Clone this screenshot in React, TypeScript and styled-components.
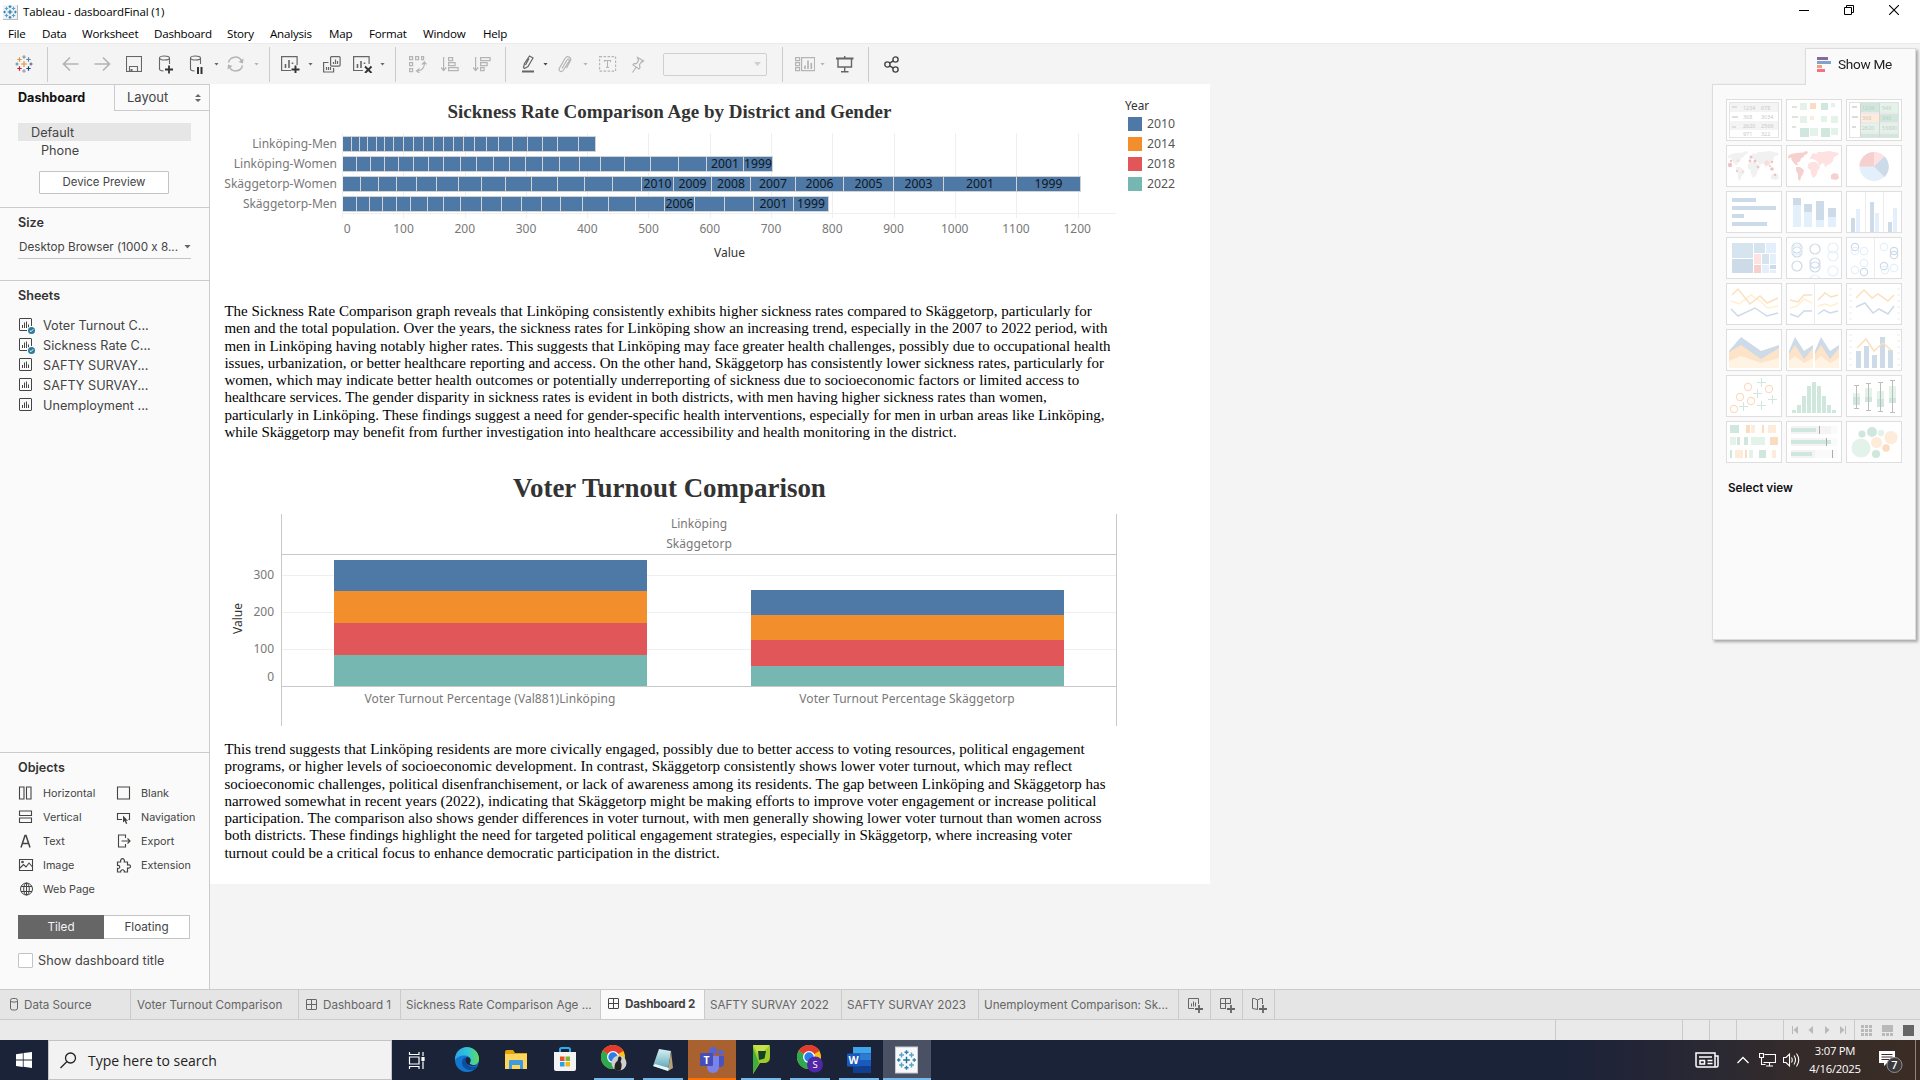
import React from 'react';
import styled, { createGlobalStyle, css } from 'styled-components';

const UI = '"Inter", "Liberation Sans", sans-serif';
const SYS = '"Open Sans", "Noto Sans", sans-serif';
const CHART = '"Noto Sans", "Open Sans", sans-serif';
const SERIF = '"Liberation Serif", "Times New Roman", serif';
const C = { blue: '#4e79a7', orange: '#f28e2b', red: '#e15759', teal: '#76b7b2', line: '#cbcbcb', icon: '#666666', dim: '#b4b4b4' };

const Global = createGlobalStyle`
  *, *::before, *::after { box-sizing: border-box; }
  body { margin: 0; background: #f4f4f4; overflow: hidden; }
  svg { display: block; flex: none; }
`;

const Screen = styled.div`
  position: relative;
  width: 1920px;
  height: 1080px;
  display: flex;
  flex-direction: column;
  background: #f4f4f4;
  font-family: ${UI};
  font-feature-settings: "calt" 0;
  white-space: nowrap;
  overflow: hidden;
`;

/* ---------- window chrome ---------- */
const TitleBar = styled.header`
  height: 22px;
  flex: none;
  display: flex;
  align-items: center;
  justify-content: space-between;
  background: #fff;
  padding: 0 20px 0 3px;
  font: 11.5px/22px ${SYS};
  letter-spacing: -0.13px;
  color: #000;
`;
const TitleLeft = styled.div`
  display: flex;
  align-items: center;
  gap: 5px;
  padding-top: 2px;
`;
const AppBadge = styled.div`
  width: 15px;
  height: 15px;
  background: #eef3f6;
  border-right: 1px solid #b9b9b9;
  border-bottom: 1px solid #b9b9b9;
`;
const WindowButtons = styled.div`
  display: flex;
  gap: 35px;
  padding-right: 1px;
  margin-top: -2px;
`;
const MenuBar = styled.nav`
  height: 21px;
  flex: none;
  display: flex;
  background: #fff;
  padding-left: 8px;
  font: 11.6px/23px ${SYS};
  letter-spacing: -0.22px;
  color: #000;
`;
const MenuItem = styled.span<{ $w: number }>`
  width: ${p => p.$w}px;
`;

/* ---------- toolbar ---------- */
const ToolBar = styled.div`
  height: 41px;
  flex: none;
  display: flex;
  align-items: center;
  border-top: 1px solid #ebebeb;
  background: #f4f4f4;
  padding-left: 15px;
`;
const Sep = styled.i<{ $ml: number }>`
  width: 1px;
  height: 35px;
  background: ${C.line};
  margin-left: ${p => p.$ml}px;
`;
const Tool = styled.span<{ $ml: number; $c?: string }>`
  margin-left: ${p => p.$ml}px;
  color: ${p => p.$c || C.icon};
`;
const Caret = styled.i<{ $ml?: number; $c?: string; $big?: boolean }>`
  width: ${p => (p.$big ? 7 : 5)}px;
  height: ${p => (p.$big ? 4 : 3)}px;
  flex: none;
  margin-left: ${p => p.$ml || 0}px;
  background: ${p => p.$c || C.icon};
  clip-path: polygon(0 0, 100% 0, 50% 100%);
`;
const ToolSelect = styled.div`
  margin-left: 18px;
  width: 104px;
  height: 23px;
  border: 1px solid #d0d0d0;
  border-radius: 2px;
  display: flex;
  align-items: center;
  justify-content: flex-end;
  padding-right: 5px;
`;

/* ---------- body ---------- */
const Body = styled.div`
  height: 905px;
  flex: none;
  display: flex;
`;
const Side = styled.aside`
  width: 210px;
  flex: none;
  display: flex;
  flex-direction: column;
  background: #fafafa;
  border-right: 1px solid ${C.line};
  border-top: 1px solid ${C.line};
  color: #444;
`;
const SideTabs = styled.div`
  display: flex;
  height: 26px;
  line-height: 25px;
`;
const TabOn = styled.div`
  width: 114px;
  padding-left: 18px;
  font-size: 12.6px;
  font-weight: 700;
  color: #111;
`;
const TabOff = styled.div`
  flex: 1;
  display: flex;
  align-items: center;
  justify-content: space-between;
  padding: 0 8px 0 12px;
  border-left: 1px solid ${C.line};
  border-bottom: 1px solid ${C.line};
  font-size: 13px;
`;
const Devices = styled.section`
  height: 97px;
  padding: 12px 18px 0;
  border-bottom: 1px solid ${C.line};
  font-size: 12.7px;
  line-height: 20px;
`;
const DeviceRow = styled.div<{ $on?: boolean }>`
  height: 18px;
  padding-left: ${p => (p.$on ? 13 : 23)}px;
  background: ${p => (p.$on ? '#e6e6e6' : 'none')};
`;
const PreviewButton = styled.div`
  width: 130px;
  height: 23px;
  margin: 12px 0 0 21px;
  border: 1px solid #c4c4c4;
  border-radius: 1px;
  background: #fff;
  text-align: center;
  font-size: 11.4px;
  line-height: 21px;
`;
const SizeBox = styled.section`
  height: 73px;
  padding: 5px 18px 0;
  border-bottom: 1px solid ${C.line};
`;
const Heading = styled.h2`
  margin: 0;
  font-size: 12.6px;
  line-height: 20px;
  font-weight: 600;
  color: #333;
`;
const SizeSelect = styled.div`
  display: flex;
  align-items: center;
  justify-content: space-between;
  height: 22px;
  margin-top: 4px;
  padding-left: 1px;
  padding-bottom: 2px;
  border-bottom: 1px solid #c4c4c4;
  font-size: 11.7px;
`;
const SheetsBox = styled.section`
  height: 472px;
  padding: 5px 18px 0;
  border-bottom: 1px solid ${C.line};
`;
const SheetRow = styled.div`
  display: flex;
  align-items: center;
  height: 20px;
  gap: 8px;
  font-size: 12.7px;
  &:first-of-type { margin-top: 9px; }
`;
const ObjectsBox = styled.section`
  padding: 5px 18px 0;
`;
const ObjectGrid = styled.div`
  display: grid;
  grid-template-columns: 98px 90px;
  grid-auto-rows: 24px;
  margin-top: 3px;
`;
const ObjectCell = styled.div`
  display: flex;
  align-items: center;
  gap: 8px;
  font-size: 10.8px;
`;
const Toggle = styled.div`
  display: grid;
  grid-template-columns: 86px 86px;
  height: 23px;
  margin-top: 14px;
  font-size: 11.7px;
  line-height: 24px;
  text-align: center;
`;
const ToggleHalf = styled.div<{ $on?: boolean }>`
  ${p => (p.$on
    ? css`background: #666; color: #f4f4f4;`
    : css`background: #fff; border: 1px solid #c4c4c4; border-left: 0; line-height: 22px;`)}
`;
const CheckRow = styled.div`
  display: flex;
  align-items: center;
  gap: 5px;
  margin-top: 15px;
  height: 15px;
  font-size: 12.7px;
`;
const Check = styled.i`
  width: 15px;
  height: 15px;
  border: 1px solid #c4c4c4;
  border-radius: 1px;
  background: #fff;
`;

/* ---------- dashboard canvas ---------- */
const Canvas = styled.main`
  width: 1000px;
  height: 800px;
  flex: none;
  display: flex;
  flex-direction: column;
  background: #fff;
  color: #000;
`;
const SicknessView = styled.section`
  display: flex;
  height: 219px;
`;
const SicknessChart = styled.div`
  width: 906px;
  padding-left: 12px;
`;
const ChartTitle = styled.h1<{ $big?: boolean }>`
  margin: 0;
  font-family: ${SERIF};
  font-weight: 700;
  font-size: ${p => (p.$big ? 26.95 : 19)}px;
  line-height: ${p => (p.$big ? 44 : 26)}px;
  padding: ${p => (p.$big ? '8px 0 0 303px' : '15px 0 0 225.5px')};
  color: #333;
`;
const Plot = styled.div`
  display: flex;
  margin-top: 8px;
`;
const RowLabels = styled.div`
  width: 115px;
  padding: 1px 0 0;
  text-align: right;
  font: 12px/20px ${CHART};
  color: #787878;
`;
const PlotArea = styled.div`
  width: 774px;
  height: 85px;
  margin-left: 5px;
  padding-top: 3px;
  border-left: 1px solid #efefef;
  background:
    linear-gradient(#efefef, #efefef) 0 80px / 774px 1px no-repeat,
    repeating-linear-gradient(90deg, transparent 0 60.3px, #efefef 60.3px 61.3px) 0 0 / 737px 100% no-repeat;
`;
const BarRow = styled.div`
  display: flex;
  height: 16px;
  margin-bottom: 4px;
  border-top: 1px solid #d2d2d2;
  border-bottom: 1px solid #d2d2d2;
  width: max-content;
`;
const Seg = styled.div<{ $w: number }>`
  width: ${p => p.$w}px;
  display: flex;
  justify-content: center;
  background: ${C.blue};
  border-right: 1px solid #d2d2d2;
  font: 12.2px/14px ${CHART};
  color: #101820;
`;
const XTicks = styled.div`
  display: flex;
  margin-left: 89.6px;
  margin-top: 2px;
  font: 12px/18px ${CHART};
  color: #787878;
`;
const XTick = styled.span`
  width: 61.25px;
  flex: none;
  text-align: center;
  &:first-child { padding-left: 10px; }
`;
const AxisTitle = styled.div`
  margin: 6px 0 0 492px;
  font: 12px/18px ${CHART};
  color: #333;
`;
const Legend = styled.div`
  padding: 12px 0 0 9px;
  font: 12.3px/20px ${CHART};
  color: #555;
`;
const LegendTitle = styled.div`
  line-height: 18px;
  font-size: 11.8px;
  color: #333;
`;
const LegendItem = styled.div<{ $c: string }>`
  display: flex;
  align-items: center;
  gap: 5px;
  height: 20px;
  padding-left: 3px;
  &::before {
    content: '';
    width: 14px;
    height: 14px;
    background: ${p => p.$c};
  }
`;
const Para = styled.p`
  margin: 0;
  padding-left: 14.4px;
  font: 15px/17.25px ${SERIF};
  white-space: pre;
`;
const VoterView = styled.section`
  height: 283px;
  margin-top: 17px;
`;
const VoterBody = styled.div`
  display: flex;
  margin-top: 4px;
`;
const YAxisTitle = styled.div`
  width: 20px;
  margin: 88px 0 0 18px;
  height: 32px;
  writing-mode: vertical-rl;
  transform: rotate(180deg);
  font: 12px/20px ${CHART};
  color: #333;
`;
const YTicks = styled.div`
  width: 26px;
  padding-top: 52px;
  text-align: right;
  font: 12px/18px ${CHART};
  color: #787878;
`;
const YTick = styled.div<{ $h: number }>`
  height: ${p => p.$h}px;
`;
const VoterFrame = styled.div`
  width: 836px;
  height: 212px;
  margin-left: 7px;
  border-left: 1px solid #c8c8c8;
  border-right: 1px solid #c8c8c8;
  font: 12px/20px ${CHART};
  letter-spacing: 0.05px;
  color: #787878;
  text-align: center;
`;
const FacetHead = styled.div`
  height: 41px;
  border-bottom: 1px solid #c8c8c8;
  line-height: 20px;
`;
const FacetPlot = styled.div`
  height: 132px;
  border-bottom: 1px solid #c8c8c8;
  display: grid;
  grid-template-columns: 416px 418px;
  align-items: end;
  justify-items: center;
  background: repeating-linear-gradient(0deg, transparent 0 36px, #efefef 36px 37px);
`;
const Stack = styled.div`
  width: 313px;
`;
const Block = styled.div<{ $h: number; $c: string }>`
  height: ${p => p.$h}px;
  background: ${p => p.$c};
`;
const FacetLabels = styled.div`
  display: grid;
  grid-template-columns: 416px 418px;
  padding-top: 2px;
`;

/* ---------- Show Me panel: floats over the workspace ---------- */
const ShowMe = styled.div`
  position: absolute;
  left: 1712px;
  top: 48px;
  width: 204px;
  display: flex;
  flex-direction: column;
  filter: drop-shadow(2px 2px 1.5px rgba(0, 0, 0, 0.32));
`;
const ShowTab = styled.div`
  align-self: flex-end;
  width: 111px;
  height: 37px;
  margin-bottom: -1px;
  z-index: 1;
  display: flex;
  align-items: center;
  gap: 6px;
  padding: 0 0 7px 11px;
  background: #fafafa;
  border: 1px solid #dcdcdc;
  border-bottom: 0;
  font: 13.6px/20px Roboto, sans-serif;
  letter-spacing: -0.3px;
  color: #222;
`;
const ShowBody = styled.div`
  height: 556px;
  background: #fafafa;
  border: 1px solid #dcdcdc;
  padding: 14px 0 0 13px;
`;
const ThumbGrid = styled.div`
  display: grid;
  grid-template-columns: repeat(3, 56px);
  gap: 4px;
`;
const Thumb = styled.div`
  height: 42px;
  border: 1px solid #dedede;
  background: #fff;
`;
const SelectView = styled.div`
  margin: 15px 0 0 2px;
  font-size: 11.7px;
  line-height: 20px;
  font-weight: 600;
  color: #111;
`;

/* ---------- sheet tabs & status bar ---------- */
const SheetTabs = styled.div`
  height: 31px;
  flex: none;
  display: flex;
  background: #e5e5e5;
  border-top: 1px solid ${C.line};
  border-bottom: 1px solid ${C.line};
  font-size: 11.65px;
  color: #666;
`;
const SheetTab = styled.div<{ $w: number; $on?: boolean; $pl?: number }>`
  width: ${p => p.$w}px;
  flex: none;
  display: flex;
  align-items: center;
  gap: 5px;
  padding: 0 0 0 ${p => p.$pl ?? 6}px;
  border-right: 1px solid ${C.line};
  ${p => p.$on && css`background: #fafafa; font-weight: 700; letter-spacing: -0.18px; color: #444; padding-bottom: 2px;`}
`;
const Status = styled.div`
  height: 20px;
  flex: none;
  display: flex;
  justify-content: flex-end;
  background: #eaeaea;
`;
const StatusCell = styled.div<{ $w: number; $gap?: number }>`
  width: ${p => p.$w}px;
  display: flex;
  align-items: center;
  justify-content: center;
  gap: ${p => p.$gap || 0}px;
  border-left: 1px solid ${C.line};
  color: #b9b9b9;
`;

/* ---------- taskbar ---------- */
const TaskBar = styled.footer`
  height: 40px;
  flex: none;
  display: flex;
  background: linear-gradient(90deg, #1b2339 0, #1b2339 1560px, #232536 1640px, #2b2932 1720px, #352b2a 1800px, #3b2d25 1920px);
  color: #fff;
`;
const StartButton = styled.div`
  width: 48px;
  display: flex;
  align-items: center;
  justify-content: center;
`;
const Search = styled.div`
  width: 344px;
  display: flex;
  align-items: center;
  gap: 11px;
  padding: 1px 0 0 11px;
  background: #f2f2f2;
  border: 1px solid #c4c4c4;
  font: 14px/20px ${SYS};
  color: #222;
`;
const Task = styled.div<{ $ml?: number; $bg?: string; $bar?: string; $full?: boolean }>`
  width: 48px;
  margin-left: ${p => p.$ml || 0}px;
  flex: none;
  display: flex;
  align-items: center;
  justify-content: center;
  background: ${p => (p.$bar
    ? `linear-gradient(${p.$bar}, ${p.$bar}) center bottom / ${p.$full ? 48 : 40}px 2px no-repeat, ${p.$bg || 'transparent'}`
    : p.$bg || 'transparent')};
`;
const Tray = styled.div`
  margin-left: auto;
  display: flex;
  align-items: center;
`;
const TrayItem = styled.span<{ $ml: number; $mr?: number }>`
  margin: 0 ${p => p.$mr || 0}px 0 ${p => p.$ml}px;
`;
const Clock = styled.div`
  width: 56px;
  margin-left: 7px;
  text-align: center;
  font: 11.3px/18px ${SYS};
  letter-spacing: -0.25px;
`;
const ShowDesktop = styled.i`
  width: 5px;
  height: 40px;
  border-left: 1px solid #8b8480;
`;

/* ---------- icon helpers ---------- */
type PlusSpec = [number, number, number, string];
const Pluses = ({ d, w = 1 }: { d: PlusSpec[]; w?: number }) => (
  <>
    {d.map(([x, y, r, c], i) => (
      <path key={i} d={`M${x - r} ${y}H${x + r}M${x} ${y - r}V${y + r}`} stroke={c} strokeWidth={w} />
    ))}
  </>
);
const Logo = ({ s, colors, w }: { s: number; colors: string[]; w?: number }) => (
  <svg width={s} height={s} viewBox="0 0 18 18">
    <Pluses w={w || 1.2} d={[
      [9, 9, 3, colors[0]], [9, 2, 1.8, colors[1]], [9, 16, 1.8, colors[2]], [2, 9, 1.6, colors[3]], [16, 9, 1.6, colors[4]],
      [4.5, 4.5, 2.2, colors[5]], [13.5, 4.5, 2.2, colors[6]], [4.5, 13.5, 2.2, colors[7]], [13.5, 13.5, 2.2, colors[8]],
    ]} />
  </svg>
);
const BLUES = ['#1f6fa0', '#2f7fb0', '#2f7fb0', '#2f7fb0', '#2f7fb0', '#5da3c8', '#5da3c8', '#5da3c8', '#5da3c8'];
const Stroke = ({ w, h, children, sw = 1.2 }: { w: number; h: number; sw?: number; children: React.ReactNode }) => (
  <svg width={w} height={h} viewBox={`0 0 ${w} ${h}`} fill="none" stroke="currentColor" strokeWidth={sw}>{children}</svg>
);
const SheetIcon = ({ on }: { on?: boolean }) => (
  <Stroke w={17} h={17} sw={1}>
    <rect x="1.500" y="1.500" width="12" height="12" rx="0.5" />
    <path d="M4.500 11V8M6.500 11V5.500M8.500 11V4.500M10.500 11V7.500" />
    {on && <><circle cx="13.500" cy="13.500" r="4.500" fill="#fafafa" stroke="none" /><circle cx="13.500" cy="13.500" r="3.500" fill="#2d7a9e" stroke="none" /><path d="M11.800 13.500l1.200 1.200 2.200-2.400" stroke="#fff" /></>}
  </Stroke>
);
const GridIcon = () => <Stroke w={12} h={12} sw={1}><rect x=".5" y=".5" width="10" height="10" rx=".5" /><path d="M5.5 .5v10M.5 5.5h10" /></Stroke>;

/* ---------- data ---------- */
const rows: { name: string; stops: number[]; years: string[] }[] = [
  { name: 'Linköping-Men', stops: [9, 17, 25, 34, 42, 51, 61, 71, 81, 91, 101, 111, 121, 132, 144, 156, 170, 185, 200, 215, 236, 253], years: [] },
  { name: 'Linköping-Women', stops: [14, 28, 42, 56, 71, 86, 101, 118, 134, 151, 167, 183, 200, 217, 237, 258, 282, 308, 336, 364, 401, 430], years: ['2001', '1999'] },
  { name: 'Skäggetorp-Women', stops: [18, 36, 54, 74, 94, 116, 139, 163, 189, 215, 242, 270, 299, 331, 369, 408, 453, 501, 551, 601, 674, 738], years: ['2010', '2009', '2008', '2007', '2006', '2005', '2003', '2001', '1999'] },
  { name: 'Skäggetorp-Men', stops: [14, 27, 40, 54, 68, 85, 101, 118, 139, 159, 179, 199, 218, 240, 266, 293, 322, 352, 382, 411, 451, 486], years: ['2006', '', '', '2001', '1999'] },
];
const legend: [string, string][] = [['2010', C.blue], ['2014', C.orange], ['2018', C.red], ['2022', C.teal]];
const para1 = `The Sickness Rate Comparison graph reveals that Linköping consistently exhibits higher sickness rates compared to Skäggetorp, particularly for
men and the total population. Over the years, the sickness rates for Linköping show an increasing trend, especially in the 2007 to 2022 period, with
men in Linköping having notably higher rates. This suggests that Linköping may face greater health challenges, possibly due to occupational health
issues, urbanization, or better healthcare reporting and access. On the other hand, Skäggetorp has consistently lower sickness rates, particularly for
women, which may indicate better health outcomes or potentially underreporting of sickness due to socioeconomic factors or limited access to
healthcare services. The gender disparity in sickness rates is evident in both districts, with men having higher sickness rates than women,
particularly in Linköping. These findings suggest a need for gender-specific health interventions, especially for men in urban areas like Linköping,
while Skäggetorp may benefit from further investigation into healthcare accessibility and health monitoring in the district.`;
const para2 = `This trend suggests that Linköping residents are more civically engaged, possibly due to better access to voting resources, political engagement
programs, or higher levels of socioeconomic development. In contrast, Skäggetorp consistently shows lower voter turnout, which may reflect
socioeconomic challenges, political disenfranchisement, or lack of awareness among its residents. The gap between Linköping and Skäggetorp has
narrowed somewhat in recent years (2022), indicating that Skäggetorp might be making efforts to improve voter engagement or increase political
participation. The comparison also shows gender differences in voter turnout, with men generally showing lower voter turnout than women across
both districts. These findings highlight the need for targeted political engagement strategies, especially in Skäggetorp, where increasing voter
turnout could be a critical focus to enhance democratic participation in the district.`;
const menus: [string, number][] = [['File', 34], ['Data', 40], ['Worksheet', 72], ['Dashboard', 73], ['Story', 43], ['Analysis', 59], ['Map', 40], ['Format', 54], ['Window', 60], ['Help', 40]];

/* ---------- Show Me thumbnails (54 x 40 drawings) ---------- */
const P = { b: '#cddae7', lb: '#e3f0fb', g: '#cfe7dc', lg: '#e3f3e9', o: '#fbdcc0', lo: '#ffebd9', r: '#f6d0cf', lr: '#fde2e1', k: '#ececec' };
type R = [number, number, number, number, string];
const Rects = ({ d }: { d: R[] }) => <>{d.map(([x, y, w, h, c], i) => <rect key={i} x={x} y={y} width={w} height={h} fill={c} />)}</>;
const Line = ({ d, c }: { d: string; c: string }) => <path d={d} fill="none" stroke={c} strokeWidth="1.5" />;
const Rings = ({ d, r }: { d: [number, number, string][]; r: number }) => <>{d.map(([x, y, c], i) => <circle key={i} cx={x} cy={y} r={r} fill="none" stroke={c} strokeWidth="1.2" />)}</>;
const TinyText = styled.text`
  font: 5.4px ${CHART};
  fill: #c9c9c9;
`;
const Map = ({ a, b, c, d }: { a: string; b: string; c: string; d: string }) => (
  <>
    <path fill={a} d="M1 10l3-2 5-1 6-.5 3 1-1 3-3 2-1 3-3 1 1 3-3-1-3-4-1-3-3 1zM16 6l4-1 1 2-3 2z" />
    <path fill={b} d="M9 21l4 0 4 3-1 4-2 3-1 4-2-2 0-5-2-3z" />
    <path fill={c} d="M21 18l3-2 5 0 3 3 1 3-2 2-2 6-3 2-2-4-.5-4-3-2zM22 14l2-4 2-3 3 1 2-2 5 0 6-1 5 1 5 1-1 2-4 2-1 4-3 3-3 1-1 3-2-4-2-1-2 3-3-5-4-2-3 0z" />
    <path fill={d} d="M44 29l3-2 4 1 1 4-3 2-5-1z" />
  </>
);
const PALE = '#f1f1f1';
const thumbs: React.ReactNode[] = [
  <><rect x="2.500" y="2.500" width="49" height="35" fill="#fff" stroke="#e4e4e4" /><Rects d={[[3, 3, 48, 9, '#f4f4f4'], [3, 21, 48, 9, '#f4f4f4'], [5, 6, 5, 2, '#dfdfdf'], [5, 16, 6, 2, '#dfdfdf'], [5, 26, 4, 2, '#dfdfdf']]} />
    {[['1234', '678', 10], ['368', '3034', 19], ['2620', '2569', 28], ['971', '322', 36]].map(([x, y, t]) => <React.Fragment key={t}><TinyText x="16" y={t}>{x}</TinyText><TinyText x="34" y={t}>{y}</TinyText></React.Fragment>)}</>,
  <Rects d={[[5, 6, 5, 2, '#e2e2e2'], [5, 16, 6, 2, '#e2e2e2'], [5, 26, 4, 2, '#e2e2e2'], [13, 3, 7, 7, P.lg], [23, 3, 6, 6, P.o], [34, 3, 7, 7, P.g], [44, 3, 4, 4, P.lg], [13, 16, 7, 7, P.lg], [23, 16, 4, 4, P.lo], [34, 16, 6, 6, P.lg], [44, 16, 7, 7, P.lg], [13, 28, 9, 9, P.g], [23, 28, 8, 8, P.lg], [34, 28, 9, 9, P.g], [44, 28, 7, 7, P.lg]]} />,
  <><rect x="2.500" y="2.500" width="49" height="35" fill="#fff" stroke="#e2e2e2" /><Rects d={[[5, 6, 5, 2, '#dcdcdc'], [5, 16, 6, 2, '#dcdcdc'], [5, 26, 4, 2, '#dcdcdc'], [14, 3, 18, 9, P.g], [33, 3, 18, 9, P.lg], [14, 14, 18, 8, P.lo], [33, 14, 18, 8, P.g], [14, 24, 18, 8, P.lg], [33, 24, 18, 8, P.lg], [14, 34, 18, 3, P.g], [33, 34, 18, 3, P.g], [13, 3, 1, 34, '#d5d5d5'], [32, 3, 1, 34, '#d5d5d5'], [13, 12.5, 38, 1, '#d5d5d5'], [13, 22.5, 38, 1, '#d5d5d5'], [13, 32.5, 38, 1, '#d5d5d5']]} />
    {[['1234', '546', 10], ['368', '340', 20], ['2620', '53890', 30]].map(([x, y, t]) => <React.Fragment key={t}><TinyText x="15" y={t}>{x}</TinyText><TinyText x="35" y={t}>{y}</TinyText></React.Fragment>)}</>,
  <><Map a={PALE} b={PALE} c={PALE} d={PALE} />{([[3, 19, 2.2], [4, 15, 1.2], [11, 15, 1.4], [24, 11, 1.5], [23, 15, 1.4], [28, 15, 1.6], [40, 17, 2.6], [45, 16, 1.2], [43, 20, 1], [10, 25, 1.1], [16, 26, 1.4], [31, 21, 1.3], [45, 23, 1.8], [48, 29, 1.2]] as number[][]).map(([x, y, r], i) => <circle key={i} cx={x} cy={y} r={r} fill={i % 4 === 2 ? '#fbdcdc' : '#eec3c6'} />)}</>,
  <Map a={P.r} b={P.r} c={P.lr} d={P.r} />,
  <><circle cx="27" cy="20.500" r="14.500" fill={P.lb} /><path d="M27 20.500V6a14.500 14.500 0 0 0-14.500 14.500z" fill={P.r} /><path d="M27 20.500V6a14.500 14.500 0 0 1 10.500 4.500z" fill={P.lr} /><path d="M27 20.500L37.500 10.500a14.500 14.500 0 0 1 0 20.500z" fill={P.b} /></>,
  <Rects d={[[5, 6, 24, 4, P.b], [5, 14, 44, 4, P.b], [5, 22, 12, 4, P.b], [5, 30, 35, 4, P.b]]} />,
  <Rects d={[[6, 6, 8, 29, P.lb], [6, 6, 8, 7, P.b], [17, 12, 8, 23, P.lb], [17, 12, 8, 8, P.b], [29, 9, 8, 26, P.lb], [29, 9, 8, 19, P.b], [41, 16, 8, 19, P.lb], [41, 16, 8, 9, P.b]]} />,
  <Rects d={[[18, 0, 1, 40, '#ececec'], [36, 0, 1, 40, '#ececec'], [4, 26, 4, 14, P.b], [9, 17, 4, 23, P.lb], [23, 10, 4, 30, P.b], [28, 21, 4, 19, P.lb], [41, 30, 4, 10, P.b], [46, 16, 4, 24, P.lb]]} />,
  <Rects d={[[5, 5, 21, 15, '#d6e4f0'], [5, 21, 21, 14, P.b], [27, 5, 11, 10, '#d6e4f0'], [39, 5, 10, 10, P.lb], [27, 16, 7, 10, P.lr], [35, 16, 7, 10, '#d6e4f0'], [43, 16, 6, 10, P.lb], [27, 27, 7, 8, P.r], [35, 27, 7, 8, P.lb], [43, 27, 6, 4, P.b], [43, 32, 6, 3, P.lb]]} />,
  <Rings r={5} d={[[10, 10, P.b], [10, 14, P.b], [10, 28, P.b], [28, 11, P.b], [28, 25, P.b], [28, 29, P.b], [46, 10, P.lb], [46, 18, P.lb], [46, 33, P.lb], [28, 42, P.lb], [10, 12, P.lb]]} />,
  <><Rects d={[[27, 0, 1, 40, '#ececec']]} /><Rings r={3.7} d={[[8, 9, P.b], [8, 13, P.lb], [17, 13, P.lb], [17, 25, P.lb], [8, 32, P.lb], [17, 34, P.b], [37, 9, P.lb], [47, 13, P.b], [47, 17, P.b], [37, 28, P.b], [38, 32, P.lb], [47, 30, P.lb]]} /></>,
  <><Line c="#fff0cf" d="M4 17l8 3 12-9 9 6 8 7 10-2" /><Line c="#fbe0bf" d="M5 11l6-6 12 15 10-8 7 7 11-5" /><Line c={P.b} d="M4 25l7 7 17-8 12 8 11-3" /></>,
  <><Rects d={[[27, 0, 1, 40, '#ececec']]} /><Line c="#fbe0bf" d="M3 16l8 2 6-7h8M31 16l7-7 6 4 7-2" /><Line c="#fff0cf" d="M3 24l7-2 7-7 8 4M31 22l7-2 6 2 7-3" /><Line c={P.b} d="M3 30l8 3 6-6h8M31 30l6-4 6 3 8-2" /></>,
  <><path d="M2 5h3m-3 6h3m-3 6h3m-3 6h3m-3 6h3m-3 6h3M50 5h3m-3 6h3m-3 6h3m-3 6h3m-3 6h3m-3 6h3" stroke="#ececec" /><Line c="#fbe0bf" d="M9 14l8-8 8 8 6-4 10 7 6-6" /><Line c={P.b} d="M9 23l9-4 8 10 6-4 9 5 6-8" /></>,
  <><path d="M2 21L14 7l20 14 18-6v23H2z" fill={P.b} /><path d="M2 22l12-7 20 14 18-11v20H2z" fill="#fde3c8" /><path d="M2 31l12-5 20 7 18-5v10H2z" fill="#fff3e4" /></>,
  <><path d="M2 21L8 7l9 14 9-6v23H2zM28 21l6-14 9 14 9-6v23H28z" fill={P.b} /><path d="M2 24l6-9 9 14 9-11v20H2zM28 24l6-9 9 14 9-11v20H28z" fill="#fde3c8" /><path d="M2 31l6-5 9 7 9-5v10H2zM28 31l6-5 9 7 9-5v10H28z" fill="#fff3e4" /></>,
  <><path d="M2 5h3m-3 6h3m-3 6h3m-3 6h3m-3 6h3m-3 6h3M50 5h3m-3 6h3m-3 6h3m-3 6h3m-3 6h3m-3 6h3" stroke="#ececec" /><Rects d={[[9, 21, 5, 17, P.b], [17, 16, 5, 22, P.b], [25, 25, 5, 13, P.b], [33, 7, 5, 31, P.b], [41, 20, 5, 18, P.b]]} /><Line c="#fbe0bf" d="M10 18l9-9 8 12 9-8 9 8" /></>,
  <><Rings r={3.6} d={[[21, 11, '#fbdcc0'], [13, 21, '#fbdcc0'], [42, 13, '#fbdcc0'], [24, 25, '#fbdcc0'], [7, 33, '#fbdcc0']]} /><Pluses d={[[34.5, 6.5, 4.5, P.g], [30.5, 17.5, 4.5, P.g], [45.5, 23.5, 4.5, P.g], [34.5, 29.5, 4.5, P.g], [16.5, 30.5, 4.5, P.g]]} /></>,
  <Rects d={[[5, 34, 4, 3, P.g], [10, 29, 4, 8, P.g], [15, 20, 4, 17, P.g], [20, 10, 4, 27, P.g], [25, 6, 4, 31, P.g], [30, 10, 4, 27, P.g], [35, 20, 4, 17, P.g], [40, 29, 4, 8, P.g], [45, 34, 4, 3, P.g]]} />,
  <><Rects d={[[6, 17, 7, 4, P.lg], [6, 21, 7, 8, P.g], [18, 12, 7, 9, P.lg], [18, 21, 7, 5, P.g], [30, 15, 7, 8, P.lg], [30, 23, 7, 8, P.g], [42, 10, 7, 12, P.lg], [42, 22, 7, 5, P.g]]} /><path d="M7 9.500h5M9.500 9v23M7 32.500h5M19 7.500h5M21.500 7v27M19 34.500h5M31 6.500h5M33.500 6v29M31 35.500h5M43 4.500h5M45.500 4v32M43 36.500h5" stroke="#bdbdbd" /></>,
  <Rects d={[[3, 3, 9, 8, P.g], [19, 3, 4, 8, P.o], [24, 3, 4, 8, P.lo], [35, 3, 2, 8, P.o], [41, 3, 8, 8, P.lo], [3, 15, 6, 8, P.lg], [10, 15, 3, 8, P.g], [17, 15, 4, 8, P.g], [24, 15, 14, 8, P.lg], [43, 15, 8, 8, P.o], [3, 28, 2, 8, P.g], [8, 28, 8, 8, P.lo], [18, 28, 2, 8, P.o], [22, 28, 4, 8, P.lg], [32, 28, 7, 8, P.g], [45, 28, 4, 8, P.lo]]} />,
  <Rects d={[[4, 4, 46, 8, '#fafafa'], [4, 4, 40, 8, '#f4f4f4'], [4, 6, 25, 4, P.g], [32, 4, 1, 8, '#ababab'], [4, 16, 46, 8, '#fafafa'], [4, 16, 36, 8, '#f4f4f4'], [4, 18, 40, 4, P.g], [39, 16, 1, 8, '#ababab'], [4, 28, 46, 8, '#fafafa'], [4, 28, 24, 8, '#f4f4f4'], [4, 30, 21, 4, P.g], [45, 28, 1, 8, '#ababab']]} />,
  <>{([[14, 26, 9.6, P.lg], [15, 12, 3.6, P.g], [25, 10, 5, P.g], [34, 11, 3.2, P.lg], [44, 15.5, 6.6, P.lo], [29.5, 20.5, 5.6, P.lo], [39, 26, 3.8, P.o], [29, 32, 4.1, P.g]] as [number, number, number, string][]).map(([x, y, r, c], i) => <circle key={i} cx={x} cy={y} r={r} fill={c} />)}</>,
];

/* ---------- taskbar icons ---------- */
const Chrome = ({ badge }: { badge: React.ReactNode }) => (
  <svg width="28" height="30" viewBox="0 0 28 30">
    <circle cx="13" cy="12" r="12" fill="#fbc116" />
    <path d="M13 12L2.600 6A12 12 0 0 1 23.400 6z" fill="#e33b2e" />
    <path d="M2.600 6A12 12 0 0 0 13 24l5.200-9L13 12z" fill="#2da94f" />
    <circle cx="13" cy="12" r="6" fill="#fff" /><circle cx="13" cy="12" r="4.700" fill="#2b7de9" />
    {badge}
  </svg>
);
const Edge = () => (
  <svg width="26" height="26" viewBox="0 0 26 26">
    <defs>
      <linearGradient id="eg" x1="0" x2="1"><stop offset="0" stopColor="#2aa6e0" /><stop offset=".5" stopColor="#2fc2df" /><stop offset="1" stopColor="#63db5a" /></linearGradient>
    </defs>
    <circle cx="13" cy="13" r="12" fill="#1377cf" />
    <path d="M1 12A12 12 0 0 1 25 12c0 4-3 6-6 6-3 0-4-1-3-2.500 2-3 0-7-5-7-5 0-9 2-10 5z" fill="url(#eg)" />
    <path d="M9 12c-3 5 1 11 7 11 3 0 6-1 8-4-2 1-9 2-11-3-1-2 0-4 1-5-2-1-4-.5-5 1z" fill="#0c4f9e" />
    <path d="M16 15.500c1.500-2.500 0-5.500-3-5.500-1.800 1.500-2 5.500 1.200 7.500 3.500 2.300 8.500 1.300 10.500-1.300-1 1.300-3 1.800-5 1.800-3 0-4.700-1-3.700-2.500z" fill="#1b2339" />
  </svg>
);

export default function App() {
  return (
    <Screen>
      <Global />
      <TitleBar>
        <TitleLeft>
          <AppBadge><Logo s={14} colors={BLUES} w={1.5} /></AppBadge>Tableau - dasboardFinal (1)
        </TitleLeft>
        <WindowButtons>
          <svg width="10" height="10"><path d="M0 5.500h10" stroke="#000" /></svg>
          <svg width="10" height="10" fill="none" stroke="#000"><path d="M.5 2.500h7v7h-7zM2.500 2.500v-2h7v7h-2" /></svg>
          <svg width="10" height="10"><path d="M0 0l10 10M10 0L0 10" stroke="#000" strokeWidth="1.100" /></svg>
        </WindowButtons>
      </TitleBar>
      <MenuBar>{menus.map(([m, w]) => <MenuItem key={m} $w={w}>{m}</MenuItem>)}</MenuBar>

      <ToolBar>
        <Tool $ml={0}><Logo s={18} colors={['#eb8e3c', '#7199a6', '#8c95b0', '#5c8cb0', '#5a6591', '#e8932f', '#5b879b', '#c72035', '#1f447e']} /></Tool>
        <Sep $ml={14} />
        <Tool $ml={14} $c={C.dim}><Stroke w={17} h={16} sw={1.7}><path d="M16.500 8H1.500M8 1.500L1.500 8 8 14.500" /></Stroke></Tool>
        <Tool $ml={15} $c={C.dim}><Stroke w={17} h={16} sw={1.7}><path d="M.5 8h15M9 1.500L15.500 8 9 14.500" /></Stroke></Tool>
        <Tool $ml={15}><Stroke w={16} h={16} sw={1.1}><rect x=".5" y=".5" width="15" height="15" /><path d="M3.500 15.500v-5h8v5" /><path d="M5.500 13v2.500" strokeWidth="2" /></Stroke></Tool>
        <Tool $ml={16}><Stroke w={16} h={19} sw={1.1}><ellipse cx="6.500" cy="3" rx="5" ry="2" /><path d="M1.500 3v11c0 1 1 1.800 4 2M11.500 3v6" /><path d="M11 10.500v8M7 14.500h8" stroke="#333" strokeWidth="1.800" /></Stroke></Tool>
        <Tool $ml={15}><Stroke w={15} h={19} sw={1.1}><ellipse cx="6.500" cy="3" rx="5" ry="2" /><path d="M1.500 3v11c0 1 1 1.800 4 2M11.500 3v6" /><path d="M9 12v7M12.500 12v7" stroke="#333" strokeWidth="2" /></Stroke></Tool>
        <Caret $ml={10} />
        <Tool $ml={7} $c={C.dim}><Stroke w={19} h={16} sw={1.5}><path d="M2.500 6.500A7 7 0 0 1 15.800 5.500M16.500 9.500A7 7 0 0 1 3.200 10.500" /><path d="M17.500 2.500l-.5 5-4.500-1.500zM1.500 13.500l.5-5 4.500 1.500z" fill="currentColor" stroke="none" /></Stroke></Tool>
        <Caret $ml={9} $c={C.dim} />
        <Sep $ml={10} />
        <Tool $ml={11}><Stroke w={20} h={18} sw={1.2}><path d="M10 15.500H.6V1.600h15.500V10" /><path d="M4.500 13V9M8 13V5M11.500 9V7.500" strokeWidth="1.600" /><path d="M14.500 10.500v8M10.500 14.500h8" stroke="#333" strokeWidth="1.900" /></Stroke></Tool>
        <Caret $ml={7} />
        <Tool $ml={10}><Stroke w={18} h={17} sw={1.2}><rect x="7.600" y=".6" width="9.500" height="9.500" rx="1" /><path d="M5.500 6.500H.6v9.500h10v-4M10.500 8V6M12.500 8V3.500M14.500 8V5M3.500 14v-3M5.500 14v-3M7.500 14v-3" /></Stroke></Tool>
        <Tool $ml={12}><Stroke w={20} h={18} sw={1.2}><path d="M10 15.500H.6V1.600h15.500V9" /><path d="M4.500 13V9M8 13V6M11.500 9V7.500" strokeWidth="1.600" /><path d="M12 11.500l6.500 6.500M18.500 11.500L12 18" stroke="#333" strokeWidth="1.900" /></Stroke></Tool>
        <Caret $ml={7} />
        <Sep $ml={10} />
        <Tool $ml={13} $c={C.dim}><Stroke w={18} h={18} sw={1.2}><path d="M.6 1.600h3v3h-3zM6.600 1.600h3v3h-3zM12.600 1.600h2v3h-2zM.6 7.600h3v3h-3zM.6 13.600h3v3h-3z" /><path d="M15.500 7.500c0 5-2.500 8-7 8.500M13 9.500l2.500-2.500 2 2.500M10.500 13.500l-3 2.500 3 2" /></Stroke></Tool>
        <Tool $ml={14} $c={C.dim}><Stroke w={18} h={16} sw={1.2}><path d="M2.600 1v13M0 11.500l2.600 3 2.600-3" /><path d="M7.600 1.600h4v3h-4zM7.600 6.600h6.500v3H7.600zM7.600 11.600h9.500v3H7.600z" /></Stroke></Tool>
        <Tool $ml={14} $c={C.dim}><Stroke w={18} h={16} sw={1.2}><path d="M2.600 1v13M0 11.500l2.600 3 2.600-3" /><path d="M7.600 1.600h9.500v3H7.600zM7.600 6.600h6.500v3H7.600zM7.600 11.600h3.500v3H7.600z" /></Stroke></Tool>
        <Sep $ml={14} />
        <Tool $ml={15}><Stroke w={14} h={18} sw={1.2}><path d="M2.500 12.500l1-4L8.500 1l3.500 2-5 8.500-3.500 2zM8 3.500L4.500 10" /><path d="M1 16.500h12" strokeWidth="2" /></Stroke></Tool>
        <Caret $ml={8} $c="#444" />
        <Tool $ml={10} $c={C.dim}><Stroke w={14} h={17} sw={1.2}><path d="M4 12.500L9 4c1-1.700 3-.5 2 1.200L5.500 14c-2 3-5.500 1-4-2L7 2.500c2.500-3.500 7-1 5.300 2.500L8.500 12" /></Stroke></Tool>
        <Caret $ml={11} $c={C.dim} />
        <Tool $ml={11} $c={C.dim}><Stroke w={18} h={16} sw={1.1}><rect x=".6" y=".6" width="16" height="14.500" strokeDasharray="2.500 1.500" /><path d="M5.500 6V4.500h6V6M8.500 4.500v7M7 11.500h3" /></Stroke></Tool>
        <Tool $ml={14} $c={C.dim}><Stroke w={14} h={17} sw={1.2}><path d="M6.500 1.500l6 3.500-1 1-1-.3-2 3 .5 3-1 1.200-6-4 1-1.200h2.500l2-3-.5-1.600zM5 11.500l-3.500 5" /></Stroke></Tool>
        <ToolSelect><Caret $big $c="#cfcfcf" /></ToolSelect>
        <Sep $ml={15} />
        <Tool $ml={12} $c={C.dim}><Stroke w={20} h={16} sw={1.2}><path d="M.6 1.600h4v3h-4zM.6 6.600h4v3h-4zM.6 11.600h4v3h-4zM6.600 1.600h13v13h-13z" /><path d="M10 13V9.500M13 13V4.500M16.300 13V7" strokeWidth="1.700" /></Stroke></Tool>
        <Caret $ml={5} $c={C.dim} />
        <Tool $ml={11}><Stroke w={18} h={17} sw={1.4}><path d="M0 2.500h17.500" strokeWidth="2" /><path d="M2 2.500v8.500h13.500V2.500M8.700 11v4.500M5 15.800h7.500M8.700 0v2" /></Stroke></Tool>
        <Sep $ml={14} />
        <Tool $ml={15} $c="#444"><Stroke w={15} h={17} sw={1.4}><circle cx="3.400" cy="8.500" r="2.600" /><circle cx="11.500" cy="3.500" r="2.600" /><circle cx="11.500" cy="13.500" r="2.600" /><path d="M5.700 7.200l3.600-2.300M5.700 9.800l3.600 2.300" /></Stroke></Tool>
      </ToolBar>

      <Body>
        <Side>
          <SideTabs>
            <TabOn>Dashboard</TabOn>
            <TabOff>Layout<svg width="6" height="8"><path d="M0 3l3-3 3 3zM0 5l3 3 3-3z" fill="#666" /></svg></TabOff>
          </SideTabs>
          <Devices>
            <DeviceRow $on>Default</DeviceRow>
            <DeviceRow>Phone</DeviceRow>
            <PreviewButton>Device Preview</PreviewButton>
          </Devices>
          <SizeBox>
            <Heading>Size</Heading>
            <SizeSelect>Desktop Browser (1000 x 8...<Caret $big /></SizeSelect>
          </SizeBox>
          <SheetsBox>
            <Heading>Sheets</Heading>
            {['Voter Turnout C...', 'Sickness Rate C...', 'SAFTY SURVAY...', 'SAFTY SURVAY...', 'Unemployment ...'].map((s, i) => (
              <SheetRow key={i}><SheetIcon on={i < 2} />{s}</SheetRow>
            ))}
          </SheetsBox>
          <ObjectsBox>
            <Heading>Objects</Heading>
            <ObjectGrid>
              <ObjectCell><Stroke w={17} h={14} sw={1.1}><path d="M1.500 1h4.500v12H1.500zM8.500 1H13v12H8.500z" /></Stroke>Horizontal</ObjectCell>
              <ObjectCell><Stroke w={17} h={14} sw={1.1}><path d="M1.500 1h12v12h-12z" /></Stroke>Blank</ObjectCell>
              <ObjectCell><Stroke w={17} h={14} sw={1.1}><path d="M1.500 1h12v4.500h-12zM1.500 8h12v4.500h-12z" /></Stroke>Vertical</ObjectCell>
              <ObjectCell><Stroke w={17} h={14} sw={1.1}><path d="M6 9.500H1.500v-6h12v6h-1" /><path d="M7 5.500v7l1.700-1.400L10 14l1.300-.6-1.300-2.700h2z" fill="currentColor" stroke="none" /></Stroke>Navigation</ObjectCell>
              <ObjectCell><Stroke w={17} h={14} sw={1.5}><path d="M3 13.500L7 1.500h1l4 12M4.500 9.500h6" /></Stroke>Text</ObjectCell>
              <ObjectCell><Stroke w={17} h={14} sw={1.1}><path d="M9.500 4V1h-7v12h7v-3M5.500 7h8M11.500 4.500L14 7l-2.500 2.500" /></Stroke>Export</ObjectCell>
              <ObjectCell><Stroke w={17} h={14} sw={1.1}><path d="M1.500 1.500h13v11h-13z" /><path d="M2 10l3.500-3.500L8 9l3-4 3.500 4" /><circle cx="4.500" cy="4" r=".8" /></Stroke>Image</ObjectCell>
              <ObjectCell><Stroke w={17} h={16} sw={1.2}><path d="M1.500 5h3.200c-1-4.500 4.600-4.500 3.600 0h3.200v3c4-1.200 4 4 0 3v4H8.300c.8-3-4.200-3-3.600 0H1.500v-3.600c3 .7 3-3.700 0-3z" /></Stroke>Extension</ObjectCell>
              <ObjectCell><Stroke w={17} h={14} sw={1}><circle cx="8.500" cy="7" r="6" /><ellipse cx="8.500" cy="7" rx="2.800" ry="6" /><path d="M8.500 1v12M3 4.500h11M3 9.500h11" /></Stroke>Web Page</ObjectCell>
            </ObjectGrid>
            <Toggle><ToggleHalf $on>Tiled</ToggleHalf><ToggleHalf>Floating</ToggleHalf></Toggle>
            <CheckRow><Check />Show dashboard title</CheckRow>
          </ObjectsBox>
        </Side>

        <Canvas>
          <SicknessView>
            <SicknessChart>
              <ChartTitle>Sickness Rate Comparison Age by District and Gender</ChartTitle>
              <Plot>
                <RowLabels>{rows.map(r => <div key={r.name}>{r.name}</div>)}</RowLabels>
                <PlotArea>
                  {rows.map(r => (
                    <BarRow key={r.name}>
                      {r.stops.map((s, i) => (
                        <Seg key={s} $w={s - (i ? r.stops[i - 1] : 0)}>{r.years[i - (r.stops.length - r.years.length)] || ''}</Seg>
                      ))}
                    </BarRow>
                  ))}
                </PlotArea>
              </Plot>
              <XTicks>{Array.from({ length: 13 }, (_, i) => <XTick key={i}>{i * 100}</XTick>)}</XTicks>
              <AxisTitle>Value</AxisTitle>
            </SicknessChart>
            <Legend>
              <LegendTitle>Year</LegendTitle>
              {legend.map(([y, c]) => <LegendItem key={y} $c={c}>{y}</LegendItem>)}
            </Legend>
          </SicknessView>
          <Para>{para1}</Para>
          <VoterView>
            <ChartTitle $big>Voter Turnout Comparison</ChartTitle>
            <VoterBody>
              <YAxisTitle>Value</YAxisTitle>
              <YTicks><YTick $h={37}>300</YTick><YTick $h={37}>200</YTick><YTick $h={28}>100</YTick><YTick $h={20}>0</YTick></YTicks>
              <VoterFrame>
                <FacetHead>Linköping<br />Skäggetorp</FacetHead>
                <FacetPlot>
                  <Stack><Block $h={31} $c={C.blue} /><Block $h={32} $c={C.orange} /><Block $h={32} $c={C.red} /><Block $h={31} $c={C.teal} /></Stack>
                  <Stack><Block $h={25} $c={C.blue} /><Block $h={25} $c={C.orange} /><Block $h={26} $c={C.red} /><Block $h={20} $c={C.teal} /></Stack>
                </FacetPlot>
                <FacetLabels><span>Voter Turnout Percentage (Val881)Linköping</span><span>Voter Turnout Percentage Skäggetorp</span></FacetLabels>
              </VoterFrame>
            </VoterBody>
          </VoterView>
          <Para>{para2}</Para>
        </Canvas>
      </Body>

      <SheetTabs>
        <SheetTab $w={131} $pl={9}><Stroke w={10} h={13} sw={1}><rect x="1.500" y=".5" width="7" height="11.500" rx="2" /><path d="M1.500 3c1 1.500 6 1.500 7 0" /></Stroke>Data Source</SheetTab>
        <SheetTab $w={168}>Voter Turnout Comparison</SheetTab>
        <SheetTab $w={102} $pl={7}><GridIcon />Dashboard 1</SheetTab>
        <SheetTab $w={200} $pl={5}>Sickness Rate Comparison Age ...</SheetTab>
        <SheetTab $w={104} $pl={7} $on><GridIcon />Dashboard 2</SheetTab>
        <SheetTab $w={137} $pl={5}>SAFTY SURVAY 2022</SheetTab>
        <SheetTab $w={137} $pl={5}>SAFTY SURVAY 2023</SheetTab>
        <SheetTab $w={200} $pl={5}>Unemployment Comparison: Sk...</SheetTab>
        <SheetTab $w={32} $pl={8}><Stroke w={17} h={16} sw={1}><path d="M7 11.500H1.500v-10h10V7M4.500 9.500v-3M6.500 9.500v-5M8.500 9.500v-4" /><path d="M12 8v8M8 12h8" strokeWidth="1.800" /></Stroke></SheetTab>
        <SheetTab $w={32} $pl={8}><Stroke w={17} h={16} sw={1}><path d="M7 11.500H1.500v-10h10V7M6.500 1.500v10M1.500 6.500h10" /><path d="M12 8v8M8 12h8" strokeWidth="1.800" /></Stroke></SheetTab>
        <SheetTab $w={32} $pl={8}><Stroke w={17} h={16} sw={1}><path d="M7 12.500l-5.500-1V1.500h2l3 1.500 3-1.500h2V7M6.500 3v9" /><path d="M12 8v8M8 12h8" strokeWidth="1.800" /></Stroke></SheetTab>
      </SheetTabs>
      <Status>
        <StatusCell $w={127} /><StatusCell $w={27} /><StatusCell $w={27} /><StatusCell $w={47} />
        <StatusCell $w={71} $gap={8}>
          <svg width="8" height="8" fill="currentColor"><path d="M1 0h1v8H1zM7 0v8L2.500 4z" /></svg>
          <svg width="8" height="8" fill="currentColor"><path d="M6 0v8L1.500 4z" /></svg>
          <svg width="8" height="8" fill="currentColor"><path d="M2 0v8l4.500-4z" /></svg>
          <svg width="8" height="8" fill="currentColor"><path d="M6 0h1v8H6zM1 0v8l4.500-4z" /></svg>
        </StatusCell>
        <StatusCell $w={66} $gap={10}>
          <svg width="11" height="11" fill="currentColor"><path d="M0 0h3v3H0zM4 0h3v3H4zM8 0h3v3H8zM0 4h3v3H0zM4 4h3v3H4zM8 4h3v3H8zM0 8h3v3H0zM4 8h3v3H4zM8 8h3v3H8z" /></svg>
          <svg width="11" height="11" fill="currentColor"><path d="M0 0h11v7H0zM0 8h3v3H0zM4 8h3v3H4zM8 8h3v3H8z" /></svg>
          <svg width="11" height="11" fill="#666"><path d="M0 0h11v11H0z" /></svg>
        </StatusCell>
      </Status>

      <TaskBar>
        <StartButton><svg width="16" height="16" fill="#fff"><path d="M0 2.200L6.800 1.200V7.600H0zM7.600 1.100L16 0v7.600H7.600zM0 8.400h6.800v6.500L0 13.900zM7.600 8.400H16V16l-8.400-1.200z" /></svg></StartButton>
        <Search>
          <svg width="17" height="17" fill="none" stroke="#222" strokeWidth="1.300"><circle cx="10.500" cy="6" r="5" /><path d="M7 9.500L.5 16" /></svg>
          Type here to search
        </Search>
        <Task><Stroke w={17} h={17} sw={1.2}><path d="M1.500 5h9.500v7H1.500zM1.500 0v2.500H11V0M1.500 17v-2.500H11V17M15 0v4M15 9.500V17" /><path d="M14 5.500h2v3h-2z" fill="#fff" /></Stroke></Task>
        <Task $ml={3}><Edge /></Task>
        <Task $ml={1}>
          <svg width="22" height="20"><path d="M0 2q0-2 2-2h6l2 3h12v16H0z" fill="#e5a50a" /><path d="M0 4h22v15H0z" fill="#ffd45c" /><path d="M4 19v-8q0-1 1-1h12q1 0 1 1v8h-3v-4H7v4z" fill="#3f9be0" /></svg>
        </Task>
        <Task $ml={1}>
          <svg width="24" height="26"><path d="M7 6V2.500Q7 1 8.500 1h7Q17 1 17 2.500V6" fill="none" stroke="#28b0ee" strokeWidth="2" /><path d="M1 5h22v17q0 2-2 2H3q-2 0-2-2z" fill="#f3f3f3" /><path d="M7 9.500h4.500V14H7z" fill="#e8502a" /><path d="M12.500 9.500H17V14h-4.500z" fill="#7db72f" /><path d="M7 15h4.500v4.500H7z" fill="#24a3ea" /><path d="M12.500 15H17v4.500h-4.500z" fill="#f5b81c" /></svg>
        </Task>
        <Task $ml={1} $bar="#76b9ed"><Chrome badge={<><circle cx="19" cy="18" r="7.500" fill="#cfcfcf" /><path d="M14.500 24c0-5 1-7 3-8l1-4c2-1 3 0 3 2l-1 3c2 2 1 6 0 8.500-2 .5-4 0-6-1.500z" fill="#222" /></>} /></Task>
        <Task $ml={1} $bar="#76b9ed">
          <svg width="26" height="26" viewBox="0 0 26 26"><defs><linearGradient id="np" x1="0" y1="0" x2="0" y2="1"><stop offset="0" stopColor="#d9f0f4" /><stop offset="1" stopColor="#4a9fb0" /></linearGradient></defs><path d="M9 2l12 2-3 20L3 19z" fill="url(#np)" /><path d="M21 4l2 17-5 3z" fill="#b9a078" /><path d="M3 19l15 5 1-3-14-4z" fill="#e9f5f6" /></svg>
        </Task>
        <Task $ml={1} $bg="#a9622f" $bar="#ff7200" $full>
          <svg width="26" height="28" viewBox="0 0 26 28"><circle cx="14" cy="5" r="4" fill="#5b63d0" /><circle cx="22" cy="6.500" r="2.800" fill="#5b63d0" /><path d="M18 10h7v7q0 4-4 4h-3z" fill="#4a52bf" /><path d="M8 10h12v10q0 7-6 7t-6-7z" fill="#7b83eb" /><rect x="1" y="7" width="13" height="13" rx="1" fill="#464eb8" /><text x="7.500" y="17.500" fontSize="10.500" fontWeight="700" fill="#fff" textAnchor="middle" fontFamily="Open Sans">T</text></svg>
        </Task>
        <Task $ml={1} $bar="#76b9ed">
          <svg width="20" height="30" viewBox="0 0 20 30"><path d="M2 0h15q2 0 2 2v10q0 6-6 6H9l-7 11z" fill="#9ccc2a" /><path d="M2 0h17L8 11z" fill="#c6e04a" /><path d="M2 3l6 15-6 11z" fill="#3fae3a" /><path d="M7 6h8l-1.500 7.500L8 15z" fill="#14402a" /></svg>
        </Task>
        <Task $ml={1} $bar="#76b9ed"><Chrome badge={<><circle cx="19" cy="19.500" r="8" fill="#5127a8" /><text x="19" y="23" fontSize="9.500" fill="#fff" textAnchor="middle" fontFamily="Open Sans">S</text></>} /></Task>
        <Task $ml={1} $bar="#76b9ed">
          <svg width="26" height="28" viewBox="0 0 26 28"><path d="M7 1h18v6.500H7z" fill="#41a5ee" /><path d="M7 7.500h18V14H7z" fill="#2b7cd3" /><path d="M7 14h18v6.500H7z" fill="#185abd" /><path d="M7 20.500h18V27H7z" fill="#103f91" /><rect x="1" y="7.500" width="13" height="13" rx="1" fill="#185abd" /><text x="7.500" y="17.800" fontSize="10.500" fontWeight="700" fill="#fff" textAnchor="middle" fontFamily="Open Sans">W</text></svg>
        </Task>
        <Task $bg="#4b5164" $bar="#76b9ed" $full>
          <svg width="24" height="28" viewBox="0 0 24 28"><rect x=".5" y="1" width="22" height="26" fill="#f7f9fa" stroke="#c9ccd2" /><g transform="translate(1.500 4)"><Logo s={20} colors={BLUES} w={1.3} /></g></svg>
        </Task>
        <Tray>
          <TrayItem $ml={0}><svg width="24" height="16" fill="none" stroke="#fff" strokeWidth="1.500"><path d="M1 1h19v14H2.500Q1 15 1 13.500zM20 4h3v9.500Q23 15 21.500 15h-2M4 5h13M12.500 8.500h5M12.500 11.500h5M5 8.500h4.500v3.500H5z" /></svg></TrayItem>
          <TrayItem $ml={18}><svg width="12" height="8" fill="none" stroke="#fff" strokeWidth="1.300"><path d="M.5 7L6 1.500 11.500 7" /></svg></TrayItem>
          <TrayItem $ml={10}><svg width="17" height="14" fill="none" stroke="#fff" strokeWidth="1.100"><path d="M5.500 1.500h11v8h-12M10.500 9.500v3M7 13h7M.5.500h4v4h-4zM2.500 4.500v7h4" /></svg></TrayItem>
          <TrayItem $ml={7}><svg width="17" height="16" fill="none" stroke="#fff" strokeWidth="1.100"><path d="M.5 5.500h2.500L6.500 2v12L3 10.500H.5zM8.500 5.500q1.500 2.500 0 5M11 3.500q3 4.500 0 9M13.500 1.500q4.500 6.500 0 13" /></svg></TrayItem>
          <Clock>3:07 PM<br />4/16/2025</Clock>
          <TrayItem $ml={15} $mr={11}><svg width="26" height="26"><path d="M1 4h16v12H9l-3 3v-3H1z" fill="#fff" /><path d="M3.500 7.500h11M3.500 10h11M3.500 12.500h8" stroke="#3b2d25" /><circle cx="16.500" cy="18" r="7.500" fill="#3c3a3a" stroke="#8f8f8f" /><text x="16.500" y="22" fontSize="11" fontWeight="600" fill="#fff" textAnchor="middle" fontFamily="Open Sans">7</text></svg></TrayItem>
          <ShowDesktop />
        </Tray>
      </TaskBar>

      <ShowMe>
        <ShowTab>
          <svg width="15" height="16"><path d="M0 1h11v3H0z" fill="#866b98" /><path d="M0 5h14v3H0z" fill="#7fa3cc" /><path d="M0 9h5v3H0z" fill="#f0a080" /><path d="M0 13h8v3H0z" fill="#fb6f80" /></svg>
          Show Me
        </ShowTab>
        <ShowBody>
          <ThumbGrid>{thumbs.map((t, i) => <Thumb key={i}><svg width="54" height="40" viewBox="0 0 54 40">{t}</svg></Thumb>)}</ThumbGrid>
          <SelectView>Select view</SelectView>
        </ShowBody>
      </ShowMe>
    </Screen>
  );
}
